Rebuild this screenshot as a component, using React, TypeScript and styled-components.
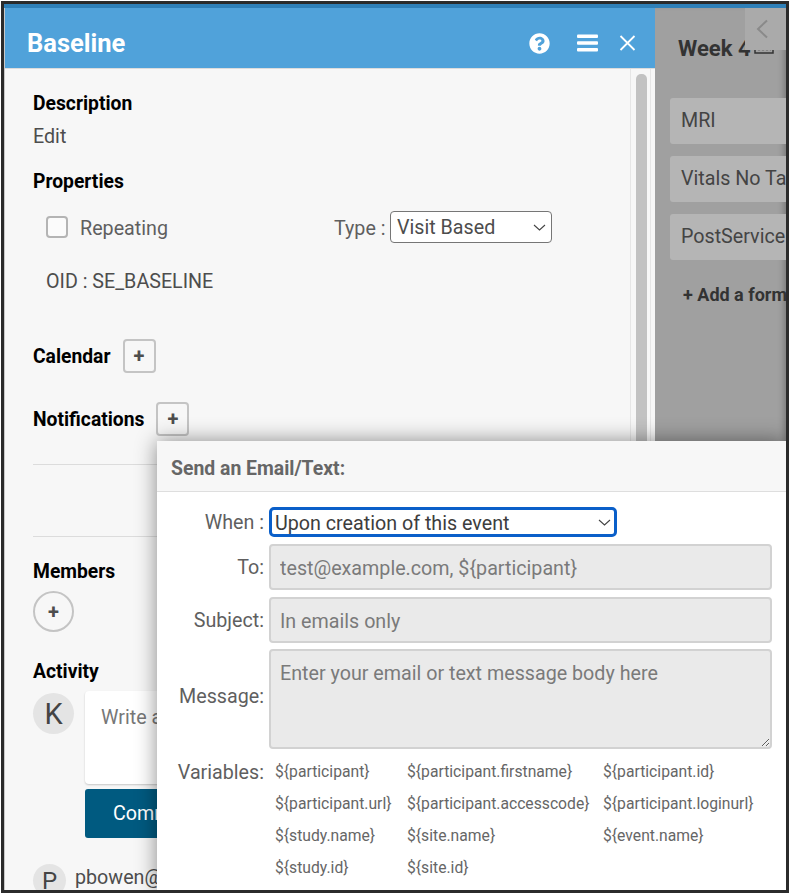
import { ReactNode } from 'react';
import styled, { createGlobalStyle } from 'styled-components';
import { FaQuestionCircle } from 'react-icons/fa';

const GlobalStyle = createGlobalStyle`
  html, body {
    margin: 0;
    padding: 0;
    background: #fff;
    font-family: Roboto, "Liberation Sans", sans-serif;
  }
`;

const chevron =
  "url(\"data:image/svg+xml,%3Csvg xmlns='http://www.w3.org/2000/svg' width='13' height='7' viewBox='0 0 13 7' fill='none' stroke='%23444' stroke-width='1.1'%3E%3Cpath d='M1 1l5.5 5L12 1'/%3E%3C/svg%3E\")";

const Frame = styled.div`
  position: relative;
  box-sizing: border-box;
  margin: 1px;
  width: 788px;
  height: 892px;
  border: 3px solid #2b2b2b;
  overflow: hidden;
  display: flex;
  flex-direction: column;
`;

const TopStrip = styled.div`
  height: 4px;
  flex: none;
  background: #2f80b8;
`;

const Columns = styled.div`
  flex: 1;
  display: flex;
  min-height: 0;
  background: #c8c8c8;
`;

const Modal = styled.div`
  width: 650px;
  flex: none;
  margin-left: 1px;
  background: #f7f7f7;
  display: flex;
  flex-direction: column;
`;

const ModalHeader = styled.div`
  height: 61px;
  flex: none;
  box-sizing: border-box;
  background: #50a2da;
  border-bottom: 1px solid #dcdcdc;
  display: flex;
  align-items: center;
  padding: 10px 19px 0 22px;
  color: #fff;
`;

const ModalTitle = styled.div`
  font-size: 25.5px;
  font-weight: 700;
  flex: 1;
`;

const HeaderIcons = styled.div`
  display: flex;
  align-items: center;
  svg {
    display: block;
  }
`;

const MenuIcon = styled.svg`
  margin: 0 21px 0 27px;
`;

const ModalBody = styled.div`
  flex: 1;
  display: flex;
  min-height: 0;
`;

const Content = styled.div`
  flex: 1;
  min-width: 0;
  padding: 23px 0 0 28px;
`;

const ScrollTrack = styled.div`
  width: 21px;
  flex: none;
  box-sizing: border-box;
  margin-right: 4px;
  padding: 5px 3px 0 5px;
  border-left: 1px solid #e6e6e6;
  border-right: 1px solid #e6e6e6;
`;

const ScrollThumb = styled.div`
  height: 100%;
  border-radius: 5px;
  background: #c2c2c2;
`;

const Heading = styled.div<{ $top?: number }>`
  font-size: 19.3px;
  line-height: 24px;
  font-weight: 700;
  color: #000;
  margin-top: ${(p) => p.$top ?? 0}px;
`;

const RowHeading = styled(Heading)`
  padding-top: 2px;
`;

const Plain = styled.div<{ $top?: number; $left?: number }>`
  font-size: 19.7px;
  line-height: 24px;
  color: #4d4d4d;
  margin-top: ${(p) => p.$top ?? 0}px;
  margin-left: ${(p) => p.$left ?? 0}px;
`;

const PropertyRow = styled.div`
  display: flex;
  align-items: center;
  height: 32px;
  margin: 17px 0 0 13px;
`;

const CheckBox = styled.div`
  width: 22px;
  height: 22px;
  box-sizing: border-box;
  border: 2px solid #b4b4b4;
  border-radius: 4px;
  background: #fbfbfb;
  flex: none;
`;

const RowLabel = styled.span<{ $width: number; $left: number }>`
  font-size: 19.7px;
  color: #5f5f5f;
  width: ${(p) => p.$width}px;
  margin-left: ${(p) => p.$left}px;
  padding-top: 2px;
  flex: none;
`;

const TypeSelect = styled.select`
  appearance: none;
  width: 162px;
  height: 32px;
  box-sizing: border-box;
  font-family: Roboto, sans-serif;
  font-size: 19.7px;
  color: #4d4d4d;
  background: #fff ${chevron} no-repeat right 5px center;
  border: 1px solid #767676;
  border-radius: 4px;
  padding: 1px 6px 0;
`;

const HeadingRow = styled.div<{ $top: number }>`
  display: flex;
  align-items: center;
  gap: 12px;
  margin-top: ${(p) => p.$top}px;
`;

const PlusButton = styled.div`
  width: 33px;
  height: 34px;
  box-sizing: border-box;
  border: 2px solid #c4c4c4;
  border-radius: 4px;
  display: flex;
  align-items: center;
  justify-content: center;
  color: #4d4d4d;
  font-size: 20px;
  font-weight: 700;
  line-height: 1;
`;

const Rule = styled.div<{ $top: number }>`
  height: 1px;
  background: #dcdcdc;
  margin-top: ${(p) => p.$top}px;
`;

const RoundPlus = styled(PlusButton)`
  width: 41px;
  height: 41px;
  border-radius: 50%;
  margin-top: 7px;
`;

const CommentRow = styled.div`
  display: flex;
  gap: 11px;
  margin-top: 7px;
`;

const Avatar = styled.div<{ $size: number; $font: number; $top: number }>`
  width: ${(p) => p.$size}px;
  height: ${(p) => p.$size}px;
  margin-top: ${(p) => p.$top}px;
  border-radius: 50%;
  background: #e4e4e4;
  color: #444;
  font-size: ${(p) => p.$font}px;
  display: flex;
  align-items: center;
  justify-content: center;
  flex: none;
`;

const CommentColumn = styled.div`
  flex: 1;
`;

const CommentBox = styled.div`
  height: 93px;
  box-sizing: border-box;
  background: #fff;
  border-radius: 4px;
  box-shadow: 0 1px 2px rgba(0, 0, 0, 0.2);
  padding: 15px 16px;
  font-size: 19.7px;
  line-height: 24px;
  color: #777;
`;

const CommentButton = styled.div`
  width: 130px;
  height: 49px;
  margin-top: 5px;
  border-radius: 3px;
  background: #005a80;
  color: #fff;
  font-size: 19.7px;
  display: flex;
  align-items: center;
  padding-left: 28px;
  box-sizing: border-box;
`;

const ActivityRow = styled.div`
  display: flex;
  gap: 9px;
  margin-top: 26px;
`;

const ActivityUser = styled.div`
  font-size: 19.7px;
  line-height: 24px;
  color: #4d4d4d;
  margin-top: 2px;
`;

const Side = styled.div`
  flex: 1;
  min-width: 0;
  background: #a0a0a0;
  box-shadow: inset -6px 0 6px -4px rgba(0, 0, 0, 0.25);
  padding: 26px 0 0 15px;
  overflow: hidden;
`;

const WeekTitle = styled.div`
  display: flex;
  align-items: center;
  gap: 3px;
  height: 28px;
  margin: 0 0 36px 8px;
  font-size: 22px;
  font-weight: 700;
  color: #333;
  white-space: nowrap;
`;

const FormCard = styled.div`
  width: 140px;
  height: 46px;
  box-sizing: border-box;
  margin-bottom: 12px;
  padding-left: 11px;
  border-radius: 3px;
  background: #b5b5b5;
  color: #444;
  font-size: 19.7px;
  line-height: 46px;
  white-space: nowrap;
  overflow: hidden;
`;

const AddForm = styled.div`
  margin: 24px 0 0 13px;
  font-size: 18px;
  line-height: 21px;
  font-weight: 700;
  color: #333;
  white-space: nowrap;
`;

const BackButton = styled.div`
  position: absolute;
  top: 4px;
  right: 0;
  width: 41px;
  height: 42px;
  background: #aaaaaa;
  display: flex;
  align-items: center;
  justify-content: center;
  padding-right: 6px;
  box-sizing: border-box;
`;

const Popover = styled.div`
  position: absolute;
  left: 153px;
  top: 437px;
  right: 0;
  bottom: 0;
  background: #fff;
  box-shadow: 0 0 20px rgba(0, 0, 0, 0.45);
`;

const PopoverHeader = styled.div`
  height: 51px;
  box-sizing: border-box;
  background: #f7f7f7;
  border-bottom: 1px solid #dedede;
  padding: 16px 0 0 14px;
  font-size: 19.4px;
  line-height: 24px;
  font-weight: 700;
  color: #666;
`;

const FormGrid = styled.div`
  display: grid;
  grid-template-columns: 107px 503px;
  column-gap: 5px;
  row-gap: 7px;
  padding-top: 15px;
`;

const FormLabel = styled.label`
  font-size: 19.7px;
  line-height: 24px;
  color: #5f5f5f;
  text-align: right;
  white-space: nowrap;
  align-self: center;
  padding-top: 2px;
`;

const MessageLabel = styled(FormLabel)`
  margin-bottom: 7px;
`;

const VariablesLabel = styled(FormLabel)`
  align-self: start;
  margin-top: 3px;
`;

const WhenSelect = styled.select`
  appearance: none;
  width: 348px;
  height: 30px;
  box-sizing: border-box;
  font-family: Roboto, sans-serif;
  font-size: 19.7px;
  color: #3d3d3d;
  background: #fff ${chevron} no-repeat right 3px center;
  border: 3px solid #0a5fc9;
  border-radius: 5px;
  padding: 2px 3px 0;
  outline: none;
`;

const fieldStyles = `
  width: 100%;
  box-sizing: border-box;
  display: block;
  font-family: Roboto, sans-serif;
  font-size: 19.7px;
  color: #555;
  background: #eaeaea;
  border: 2px solid #d2d2d2;
  border-radius: 4px;
  padding: 0 9px;
  &::placeholder {
    color: #7a7a7a;
    opacity: 1;
  }
`;

const FieldInput = styled.input`
  ${fieldStyles}
  height: 46px;
  padding-top: 2px;
`;

const FieldArea = styled.textarea`
  ${fieldStyles}
  height: 100px;
  margin-top: -1px;
  padding-top: 11px;
  line-height: 24px;
`;

const VariablesGrid = styled.div`
  display: grid;
  grid-template-columns: 132px 196px auto;
  grid-auto-rows: 32px;
  margin-left: 6px;
  font-size: 15.7px;
  line-height: 32px;
  color: #666;
  white-space: nowrap;
`;

const variables = [
  '${participant}',
  '${participant.firstname}',
  '${participant.id}',
  '${participant.url}',
  '${participant.accesscode}',
  '${participant.loginurl}',
  '${study.name}',
  '${site.name}',
  '${event.name}',
  '${study.id}',
  '${site.id}',
];

function CalendarGlyph() {
  return (
    <svg width="20" height="12" viewBox="0 0 20 12" fill="none" stroke="#333" strokeWidth="1.5">
      <rect x="1" y="2" width="18" height="9" />
      <path d="M1 4.5h18M4 7.5h2M8 7.5h2M12 7.5h2M16 7.5h1" />
    </svg>
  );
}

function Field({ label, children }: { label: string; children: ReactNode }) {
  return (
    <>
      <FormLabel>{label}</FormLabel>
      {children}
    </>
  );
}

export default function App() {
  return (
    <>
      <GlobalStyle />
      <Frame>
        <TopStrip />
        <Columns>
          <Modal>
            <ModalHeader>
              <ModalTitle>Baseline</ModalTitle>
              <HeaderIcons>
                <FaQuestionCircle size={21} />
                <MenuIcon width="21" height="18" viewBox="0 0 21 18" fill="#fff">
                  <rect y="0.5" width="21" height="3.4" rx="1" />
                  <rect y="7.3" width="21" height="3.4" rx="1" />
                  <rect y="14.1" width="21" height="3.4" rx="1" />
                </MenuIcon>
                <svg width="17" height="18" viewBox="0 0 17 18" stroke="#fff" strokeWidth="1.8" fill="none">
                  <path d="M1.5 2l14 14M15.5 2l-14 14" />
                </svg>
              </HeaderIcons>
            </ModalHeader>
            <ModalBody>
              <Content>
                <Heading>Description</Heading>
                <Plain $top={9}>Edit</Plain>
                <Heading $top={21}>Properties</Heading>
                <PropertyRow>
                  <CheckBox />
                  <RowLabel $left={12} $width={254}>Repeating</RowLabel>
                  <RowLabel $left={0} $width={56}>Type :</RowLabel>
                  <TypeSelect defaultValue="Visit Based">
                    <option>Visit Based</option>
                  </TypeSelect>
                </PropertyRow>
                <Plain $top={27} $left={13}>OID : SE_BASELINE</Plain>
                <HeadingRow $top={45}>
                  <RowHeading>Calendar</RowHeading>
                  <PlusButton>+</PlusButton>
                </HeadingRow>
                <HeadingRow $top={29}>
                  <RowHeading>Notifications</RowHeading>
                  <PlusButton>+</PlusButton>
                </HeadingRow>
                <Rule $top={28} />
                <Rule $top={71} />
                <Heading $top={23}>Members</Heading>
                <RoundPlus>+</RoundPlus>
                <Heading $top={28}>Activity</Heading>
                <CommentRow>
                  <Avatar $size={41} $font={29} $top={2}>K</Avatar>
                  <CommentColumn>
                    <CommentBox>Write a comment</CommentBox>
                    <CommentButton>Comment</CommentButton>
                  </CommentColumn>
                </CommentRow>
                <ActivityRow>
                  <Avatar $size={33} $font={24} $top={0}>P</Avatar>
                  <ActivityUser>pbowen@example.com</ActivityUser>
                </ActivityRow>
              </Content>
              <ScrollTrack>
                <ScrollThumb />
              </ScrollTrack>
            </ModalBody>
          </Modal>
          <Side>
            <WeekTitle>
              Week 4 <CalendarGlyph />
            </WeekTitle>
            <FormCard>MRI</FormCard>
            <FormCard>Vitals No Tablet</FormCard>
            <FormCard>PostService</FormCard>
            <AddForm>+ Add a form</AddForm>
          </Side>
        </Columns>
        <BackButton>
          <svg width="13" height="20" viewBox="0 0 13 20" fill="none" stroke="#8a8a8a" strokeWidth="2">
            <path d="M11 1.5L2 10l9 8.5" />
          </svg>
        </BackButton>
        <Popover>
          <PopoverHeader>Send an Email/Text:</PopoverHeader>
          <FormGrid>
            <Field label="When :">
              <WhenSelect defaultValue="Upon creation of this event">
                <option>Upon creation of this event</option>
              </WhenSelect>
            </Field>
            <Field label="To:">
              <FieldInput placeholder="test@example.com, ${participant}" />
            </Field>
            <Field label="Subject:">
              <FieldInput placeholder="In emails only" />
            </Field>
            <MessageLabel>Message:</MessageLabel>
            <FieldArea placeholder="Enter your email or text message body here" />
            <VariablesLabel>Variables:</VariablesLabel>
            <VariablesGrid>
              {variables.map((name) => (
                <span key={name}>{name}</span>
              ))}
            </VariablesGrid>
          </FormGrid>
        </Popover>
      </Frame>
    </>
  );
}
